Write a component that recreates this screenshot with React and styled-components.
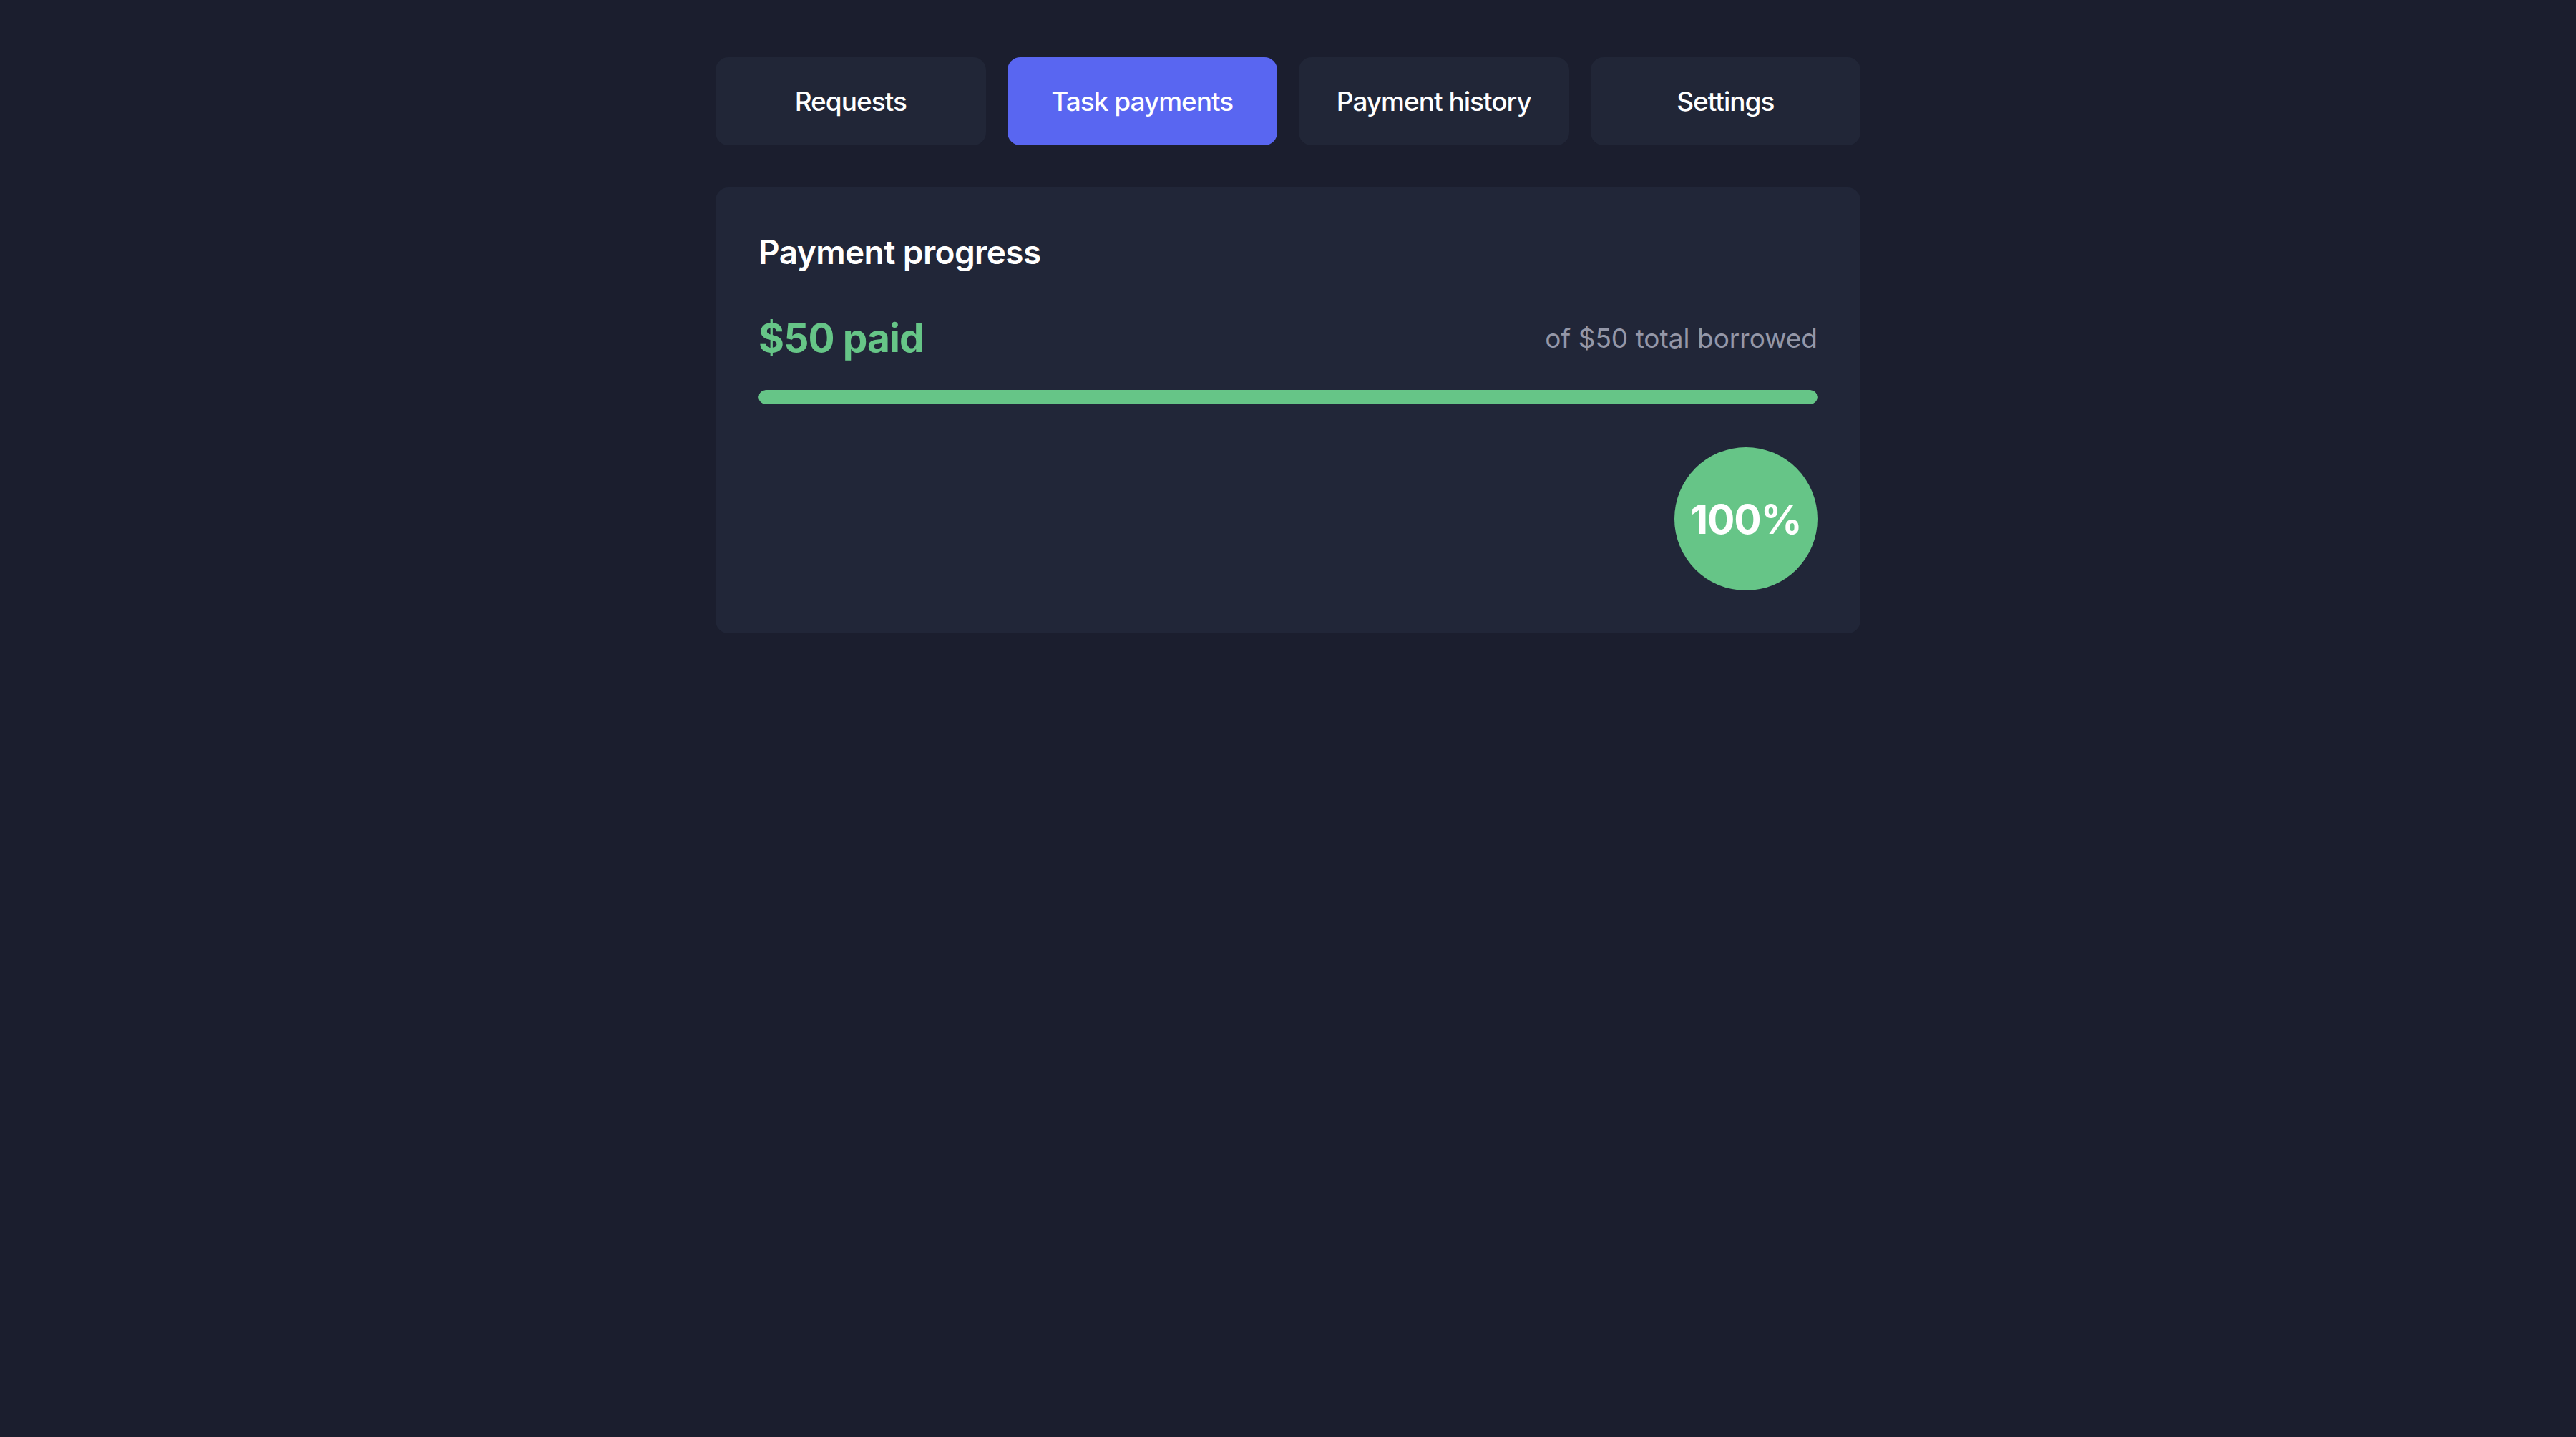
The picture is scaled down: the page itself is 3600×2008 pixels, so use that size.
import styled, { createGlobalStyle } from "styled-components"

const GlobalStyle = createGlobalStyle`
  html, body {
    margin: 0;
    padding: 0;
    background: #1b1e2e;
    font-family: Inter, "Noto Sans", "Liberation Sans", sans-serif;
  }
  * { box-sizing: border-box; }
`;

const Page = styled.div`
  min-height: 100vh;
  background: #1b1e2e;
  padding-top: 80px;
  display: flex;
  justify-content: center;
`;

const Wrapper = styled.div`
  width: 1600px;
  display: flex;
  flex-direction: column;
  gap: 59px;
`;

const Tabs = styled.nav`
  display: grid;
  grid-template-columns: repeat(4, 1fr);
  gap: 30px;
`;

const Tab = styled.button`
  height: 123px;
  border: none;
  border-radius: 18px;
  background: ${props => props.active ? "#5966f1" : "#212637"};
  color: #ffffff;
  font-family: inherit;
  font-size: 37px;
  font-weight: 500;
  letter-spacing: -1px;
  cursor: pointer;
`;

const Card = styled.section`
  background: #212638;
  border-radius: 18px;
  padding: 60px;
  display: flex;
  flex-direction: column;
`;

const Title = styled.h2`
  margin: 2px 0 59px;
  color: #ffffff;
  font-size: 46px;
  font-weight: 600;
  letter-spacing: -0.6px;
  line-height: normal;
`;

const AmountRow = styled.div`
  display: flex;
  align-items: center;
  justify-content: space-between;
`;

const Paid = styled.span`
  color: #66c587;
  font-size: 55px;
  font-weight: 700;
  letter-spacing: -0.9px;
`;

const Total = styled.span`
  color: #9497a8;
  font-size: 37px;
  font-weight: 400;
`;

const Track = styled.div`
  margin-top: 40px;
  height: 20px;
  border-radius: 10px;
  background: #2c3247;
  overflow: hidden;
`;

const Fill = styled.div`
  height: 100%;
  border-radius: 10px;
  background: #66c587;
`;

const BadgeRow = styled.div`
  margin-top: 60px;
  display: flex;
  justify-content: flex-end;
`;

const Badge = styled.div`
  width: 200px;
  height: 200px;
  border-radius: 50%;
  background: #66c587;
  color: #ffffff;
  display: flex;
  align-items: center;
  justify-content: center;
  font-size: 57px;
  font-weight: 700;
  letter-spacing: -1.1px;
`;

const tabs = ["Requests", "Task payments", "Payment history", "Settings"]

const App = () => {
    const paid = 50
    const total = 50
    const pct = Math.round((paid / total) * 100)

    return (
        <Page>
            <GlobalStyle />
            <Wrapper>
                <Tabs>
                    {tabs.map((t) => (
                        <Tab key={t} active={t === "Task payments"}>{t}</Tab>
                    ))}
                </Tabs>
                <Card>
                    <Title>Payment progress</Title>
                    <AmountRow>
                        <Paid>${paid} paid</Paid>
                        <Total>of ${total} total borrowed</Total>
                    </AmountRow>
                    <Track>
                        <Fill style={{ width: `${pct}%` }} />
                    </Track>
                    <BadgeRow>
                        <Badge>{pct}%</Badge>
                    </BadgeRow>
                </Card>
            </Wrapper>
        </Page>
    )
}

export default App
